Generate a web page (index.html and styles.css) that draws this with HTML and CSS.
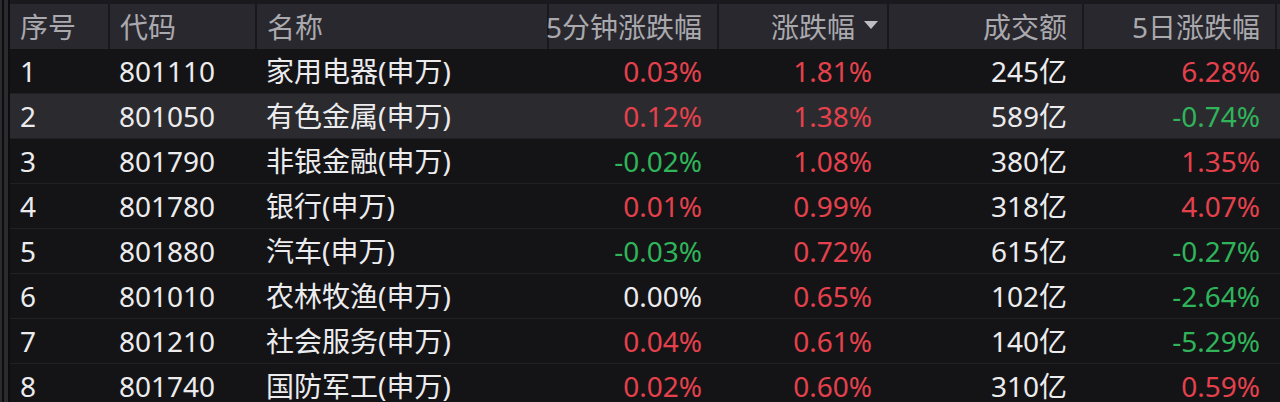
FILE: index.html
```html
<!DOCTYPE html>
<html lang="zh-CN">
<head>
<meta charset="utf-8">
<title>申万行业</title>
<link rel="stylesheet" href="styles.css">
</head>
<body>
<div class="screen">
  <div class="rail"></div>
  <div class="table">
    <div class="row head">
      <div class="c l">序号</div>
      <div class="c l">代码</div>
      <div class="c l">名称</div>
      <div class="c r">5分钟涨跌幅</div>
      <div class="c r sort">涨跌幅<span class="arrow"></span></div>
      <div class="c r">成交额</div>
      <div class="c r">5日涨跌幅</div>
      <div class="c end"></div>
    </div>
    <div class="row">
      <div class="c l">1</div><div class="c l code">801110</div><div class="c l name">家用电器(申万)</div>
      <div class="c r up">0.03%</div><div class="c r up pct">1.81%</div><div class="c r">245亿</div><div class="c r up">6.28%</div><div class="c end"></div>
    </div>
    <div class="row hl">
      <div class="c l">2</div><div class="c l code">801050</div><div class="c l name">有色金属(申万)</div>
      <div class="c r up">0.12%</div><div class="c r up pct">1.38%</div><div class="c r">589亿</div><div class="c r down">-0.74%</div><div class="c end"></div>
    </div>
    <div class="row">
      <div class="c l">3</div><div class="c l code">801790</div><div class="c l name">非银金融(申万)</div>
      <div class="c r down">-0.02%</div><div class="c r up pct">1.08%</div><div class="c r">380亿</div><div class="c r up">1.35%</div><div class="c end"></div>
    </div>
    <div class="row">
      <div class="c l">4</div><div class="c l code">801780</div><div class="c l name">银行(申万)</div>
      <div class="c r up">0.01%</div><div class="c r up pct">0.99%</div><div class="c r">318亿</div><div class="c r up">4.07%</div><div class="c end"></div>
    </div>
    <div class="row">
      <div class="c l">5</div><div class="c l code">801880</div><div class="c l name">汽车(申万)</div>
      <div class="c r down">-0.03%</div><div class="c r up pct">0.72%</div><div class="c r">615亿</div><div class="c r down">-0.27%</div><div class="c end"></div>
    </div>
    <div class="row">
      <div class="c l">6</div><div class="c l code">801010</div><div class="c l name">农林牧渔(申万)</div>
      <div class="c r">0.00%</div><div class="c r up pct">0.65%</div><div class="c r">102亿</div><div class="c r down">-2.64%</div><div class="c end"></div>
    </div>
    <div class="row">
      <div class="c l">7</div><div class="c l code">801210</div><div class="c l name">社会服务(申万)</div>
      <div class="c r up">0.04%</div><div class="c r up pct">0.61%</div><div class="c r">140亿</div><div class="c r down">-5.29%</div><div class="c end"></div>
    </div>
    <div class="row last">
      <div class="c l">8</div><div class="c l code">801740</div><div class="c l name">国防军工(申万)</div>
      <div class="c r up">0.02%</div><div class="c r up pct">0.60%</div><div class="c r">310亿</div><div class="c r up">0.59%</div><div class="c end"></div>
    </div>
  </div>
</div>
</body>
</html>
```
FILE: styles.css
```css
* { box-sizing: border-box; }
html, body { margin: 0; padding: 0; background: #141417; }
body { width: 1280px; height: 402px; overflow: hidden; }
.screen {
  display: flex;
  height: 402px;
  background: #1a1a1e;
  font-family: "Noto Sans", "Noto Sans CJK SC", sans-serif;
  font-size: 28px;
  color: #ececee;
}
.rail {
  width: 10px;
  flex: none;
  background: linear-gradient(to right, #2a2a2f 0 2px, #0d0d0f 2px 4px, #2a2a2f 4px 8px, #0d0d0f 8px 10px);
}
.table {
  flex: 1;
  padding-top: 4px;
  background: linear-gradient(#1a1a1e 0 4px, #141417 4px);
  overflow: hidden;
}
.row {
  display: grid;
  grid-template-columns: 98px 147px 292px 170px 170px 195px 193px 1fr;
  height: 45px;
  align-items: center;
  border-bottom: 1px solid #212125;
  background: #141417;
}
.row.head {
  background: #29282e;
  color: #a9a9ae;
  border-bottom: 0;
}
.row.hl { background: #2b2b2f; }
.row.last { height: 37px; border-bottom: 0; }
.c {
  height: 100%;
  display: flex;
  align-items: center;
  white-space: nowrap;
  line-height: 1;
}
.row.last .c { align-items: flex-start; padding-top: 8px; }
.c.l { justify-content: flex-start; padding-left: 10px; }
.c.code { padding-left: 11px; }
.c.name { padding-left: 11px; }
.c.r { justify-content: flex-end; padding-right: 15px; }
.head .c { border-left: 2px solid #19191c; }
.head .c:first-child { border-left: 0; }
.head .c.sort { padding-right: 9px; }
.arrow {
  display: inline-block;
  width: 0; height: 0;
  margin-left: 9px;
  margin-bottom: 4px;
  border-left: 7px solid transparent;
  border-right: 7px solid transparent;
  border-top: 8px solid #bdbdc2;
}
.up { color: #e5414c; }
.down { color: #2fb45a; }
```
